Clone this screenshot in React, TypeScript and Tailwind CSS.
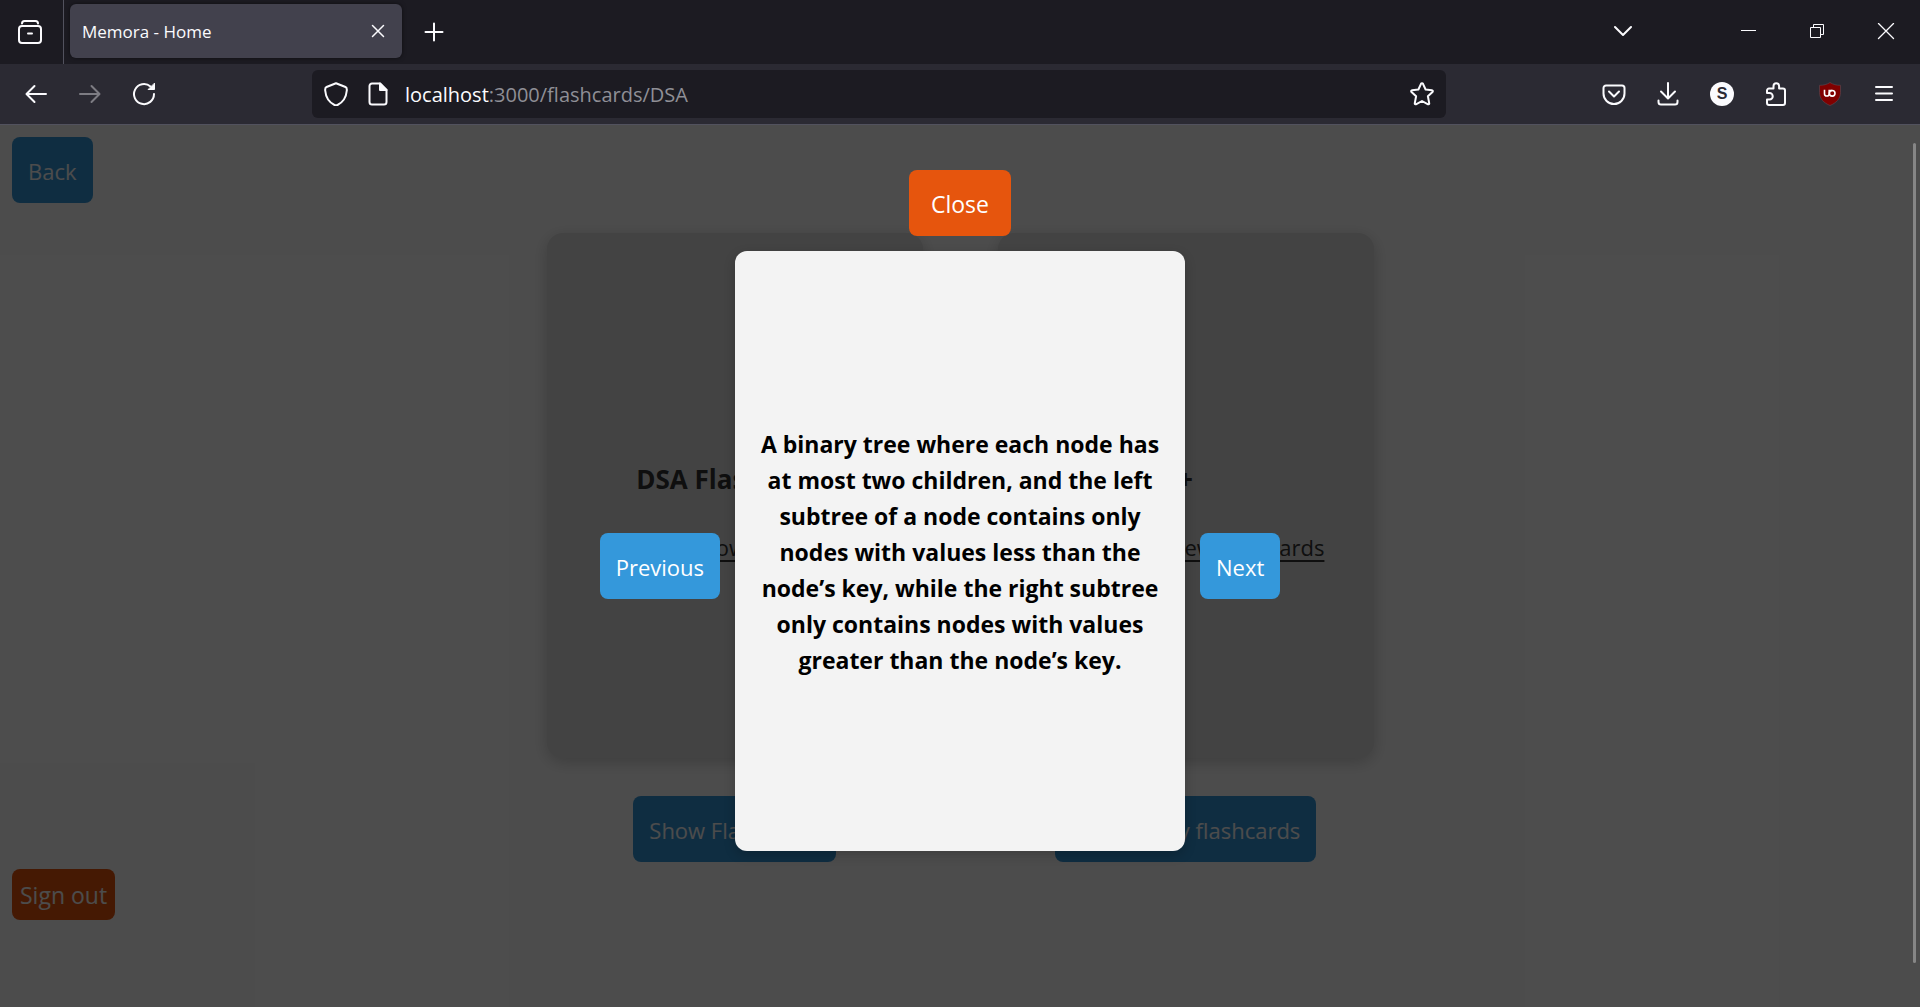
import type { ReactNode } from "react";

const BLUE_BUTTON =
  "h-[66px] rounded-lg bg-[#3498db] px-4 pt-0.5 text-[22px] text-white whitespace-nowrap";

function IconButton({ label, className, children }: { label: string; className: string; children: ReactNode }) {
  return (
    <button type="button" aria-label={label} className={`flex shrink-0 items-center justify-center text-[#fbfbfe] ${className}`}>
      {children}
    </button>
  );
}

function Stroke({ size = 24, width = 2, children }: { size?: number; width?: number; children: ReactNode }) {
  return (
    <svg
      width={size}
      height={size}
      viewBox={`0 0 ${size} ${size}`}
      fill="none"
      stroke="currentColor"
      strokeWidth={width}
      strokeLinecap="round"
      strokeLinejoin="round"
      aria-hidden="true"
    >
      {children}
    </svg>
  );
}

function TabStrip() {
  return (
    <div className="flex h-16 items-center bg-[#1c1b22]">
      <IconButton label="View recent browsing" className="h-16 w-[63px] pr-1">
        <Stroke>
          <path d="M4 3.500C4 1.800 5 1 6.500 1H17.500C19 1 20 1.800 20 3.500" />
          <rect x="1" y="6" width="22" height="17" rx="3" />
          <path d="M10 13.500h4" />
        </Stroke>
      </IconButton>
      <div className="h-16 w-px bg-[#52525e]" />
      <div className="mb-[2px] ml-1.5 flex h-[54px] w-[332px] items-center rounded-md bg-[#42414d] pr-2 pl-3 shadow-[0_0_4px_rgba(0,0,0,0.5)]">
        <span className="flex-1 pt-0.5 text-[17px] text-[#fbfbfe]">Memora - Home</span>
        <IconButton label="Close tab" className="size-8">
          <Stroke size={14} width={1}>
            <path d="M1.500 1.500l11 11M12.500 1.500l-11 11" strokeWidth="1.500" />
          </Stroke>
        </IconButton>
      </div>
      <IconButton label="New tab" className="ml-2 size-12">
        <Stroke size={20}>
          <path d="M10 1.500v17M1.500 10h17" />
        </Stroke>
      </IconButton>
      <div className="flex-1" />
      <IconButton label="List all tabs" className="mr-[66px] size-12">
        <Stroke size={20}>
          <path d="M1 5l8 8 8-8" />
        </Stroke>
      </IconButton>
      <IconButton label="Minimize" className="h-16 w-[69px]">
        <svg width="16" height="16" viewBox="0 0 16 16" aria-hidden="true">
          <path d="M0 6h15v1H0z" fill="currentColor" />
        </svg>
      </IconButton>
      <IconButton label="Restore" className="h-16 w-[68px]">
        <svg width="16" height="16" viewBox="0 0 16 16" fill="none" stroke="currentColor" aria-hidden="true">
          <path d="M1.500 3.500h10v10h-10zM4.500 3.500v-3h10v10h-3" />
        </svg>
      </IconButton>
      <IconButton label="Close window" className="h-16 w-[69px]">
        <Stroke size={18} width={1}>
          <path d="M1.500 .5l15 15M16.500 .5l-15 15" strokeWidth="1.300" />
        </Stroke>
      </IconButton>
    </div>
  );
}

function Toolbar() {
  return (
    <div className="flex h-[61px] items-center border-b border-[#52525e] bg-[#2b2a33] px-3">
      <IconButton label="Back" className="size-12">
        <Stroke>
          <path d="M22 12H3M10.500 4L2.500 12l8 8" />
        </Stroke>
      </IconButton>
      <button type="button" disabled aria-label="Forward" className="ml-1.5 flex size-12 items-center justify-center text-[#7d7c83]">
        <Stroke>
          <path d="M2 12h19M13.500 4l8 8-8 8" />
        </Stroke>
      </button>
      <IconButton label="Reload" className="ml-1.5 size-12">
        <Stroke>
          <path d="M22 12A10 10 0 1 1 18.500 4.500" />
          <path d="M22.500 1.500v6h-6z" fill="currentColor" strokeWidth="1" />
        </Stroke>
      </IconButton>

      <div className="mr-36 ml-36 flex h-12 min-w-0 flex-1 items-center rounded-md bg-[#1c1b22] pr-1">
        <IconButton label="Tracking protection" className="size-12">
          <Stroke>
            <path d="M12 1.200L21.500 5C22.800 5.500 23 6.500 22.800 8.500 22.200 15.500 18.500 20.500 13.500 23c-1 .5-2 .5-3 0C5.500 20.500 1.800 15.500 1.200 8.500 1 6.500 1.200 5.500 2.500 5z" />
          </Stroke>
        </IconButton>
        <IconButton label="Site information" className="h-12 w-9">
          <Stroke>
            <path d="M14 1.500H6A2.500 2.500 0 0 0 3.500 4v16A2.500 2.500 0 0 0 6 22.500h12a2.500 2.500 0 0 0 2.500-2.500V8z" />
            <path d="M14 1.500V8h6.500z" fill="currentColor" />
          </Stroke>
        </IconButton>
        <label htmlFor="address" className="ml-[9px] pt-0.5 text-[20px] text-[#fbfbfe]">
          localhost
        </label>
        <input
          id="address"
          type="text"
          defaultValue=":3000/flashcards/DSA"
          className="min-w-0 flex-1 bg-transparent pt-0.5 text-[20px] text-[#8f8f96] outline-none"
        />
        <IconButton label="Bookmark this page" className="h-12 w-10">
          <Stroke>
            <path d="M11 1.800c.4-.8 1.600-.8 2 0l2.600 5.700 6.300.7c.9.1 1.200 1.200.6 1.800l-4.600 4.300 1.300 6.800c.2.900-.8 1.500-1.600 1.100L12 19l-5.600 3.200c-.8.400-1.800-.2-1.600-1.100l1.300-6.800L1.500 10c-.6-.6-.3-1.700.6-1.800l6.300-.7z" />
          </Stroke>
        </IconButton>
      </div>

      <div className="flex items-center gap-1.5">
        <IconButton label="Save to Pocket" className="size-12">
          <Stroke>
            <path d="M4 3.500h16A2.500 2.500 0 0 1 22.500 6v5.500a10.500 10.500 0 0 1-21 0V6A2.500 2.500 0 0 1 4 3.500z" />
            <path d="M7 9.500l5 5 5-5" />
          </Stroke>
        </IconButton>
        <IconButton label="Downloads" className="size-12">
          <Stroke>
            <path d="M12 1v15M5 9.500l7 7 7-7M2.500 18.500V20a2.500 2.500 0 0 0 2.500 2.500h14a2.500 2.500 0 0 0 2.500-2.500v-1.500" />
          </Stroke>
        </IconButton>
        <IconButton label="Account" className="size-12">
          <span className="flex size-6 items-center justify-center rounded-full bg-[#fbfbfe] font-['Liberation_Sans'] text-base font-bold text-[#2b2a33]">
            S
          </span>
        </IconButton>
        <IconButton label="Extensions" className="size-12">
          <Stroke>
            <path d="M3 10V8.500A2 2 0 0 1 5 6.500h4.500V4a2.800 2.800 0 0 1 5.600 0v2.500H19a2 2 0 0 1 2 2V21a2 2 0 0 1-2 2H5a2 2 0 0 1-2-2v-3.500h2.500a3 3 0 0 0 0-6.500H3z" />
          </Stroke>
        </IconButton>
        <IconButton label="uBlock Origin" className="size-12">
          <svg width="24" height="24" viewBox="0 0 24 24" fill="none" aria-hidden="true">
            <path d="M12 .5c3 2 6.500 2.800 10.500 2.800v7C22.500 17 18 21 12 23.500 6 21 1.500 17 1.500 10.300v-7C5.500 3.300 9 2.500 12 .5z" fill="#800000" stroke="#5c4a52" strokeWidth=".6" />
            <g stroke="#fff" strokeWidth="1.600">
              <path d="M6.500 7.700v4a2.350 2.350 0 0 0 4.700 0v-4M11.200 8.500h3" />
              <circle cx="14.200" cy="11.300" r="2.800" />
            </g>
          </svg>
        </IconButton>
        <IconButton label="Open application menu" className="size-12">
          <Stroke size={20}>
            <path d="M2 3h16M2 9.500h16M2 16h16" />
          </Stroke>
        </IconButton>
      </div>
    </div>
  );
}

function DeckCard({ title, link, action }: { title: string; link: string; action: string }) {
  return (
    <div className="flex w-[376px] flex-col items-center gap-[38px]">
      <section className="flex h-[525px] w-full flex-col items-center justify-center gap-[30px] rounded-2xl bg-[#e0e0e0] pt-8 text-[#333] shadow-[0_4px_16px_rgba(0,0,0,0.2)]">
        <h2 className="text-[26px] leading-10 font-bold">{title}</h2>
        <a href="#cards" className="text-[22px] leading-9 whitespace-nowrap underline underline-offset-4">
          {link}
        </a>
      </section>
      <button type="button" className={BLUE_BUTTON}>
        {action}
      </button>
    </div>
  );
}

function FlashcardOverlay() {
  return (
    <div className="absolute inset-0 grid grid-cols-[1fr_450px_1fr] items-center gap-[15px] bg-black/70">
      <button type="button" className={`${BLUE_BUTTON} justify-self-end`}>
        Previous
      </button>
      <div className="flex flex-col items-center gap-[15px] self-start pt-[45px]">
        <button type="button" className="h-[66px] rounded-lg bg-[#e6550d] px-[22px] pt-0.5 text-[23px] text-white">
          Close
        </button>
        <article className="flex min-h-[600px] w-full items-center rounded-xl bg-[#f3f3f3] px-6 pt-0.5 shadow-[0_4px_12px_rgba(0,0,0,0.2)]">
          <p className="text-center text-[23px] leading-9 font-bold text-black">
            A binary tree where each node has at most two children, and the left subtree of a node contains only nodes
            with values less than the node’s key, while the right subtree only contains nodes with values greater than
            the node’s key.
          </p>
        </article>
      </div>
      <button type="button" className={`${BLUE_BUTTON} justify-self-start`}>
        Next
      </button>
    </div>
  );
}

export default function App() {
  return (
    <div className="flex min-h-screen flex-col font-['Open_Sans',sans-serif]">
      <header>
        <TabStrip />
        <Toolbar />
      </header>
      <main className="relative flex-1 bg-white">
        <div className="px-3 pt-3">
          <button type="button" className={BLUE_BUTTON}>
            Back
          </button>
        </div>
        <div className="flex justify-center gap-[75px] pt-[30px]">
          <DeckCard title="DSA Flashcards" link="Click to show flashcards" action="Show Flashcards" />
          <DeckCard title="+" link="Click to add new flashcards" action="Manage my flashcards" />
        </div>
        <div className="px-3 pt-[7px]">
          <button type="button" className="h-[51px] rounded-lg bg-[#e6550d] px-2 pt-0.5 text-[23px] text-white">
            Sign out
          </button>
        </div>
        <FlashcardOverlay />
        <div className="absolute top-[18px] right-1 bottom-11 w-[3px] rounded-full bg-[#868686]" />
      </main>
    </div>
  );
}
